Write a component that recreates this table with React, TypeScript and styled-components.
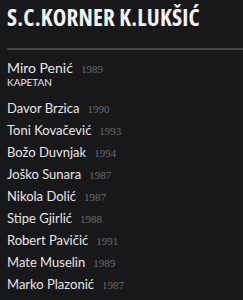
import React from 'react';
import styled, { createGlobalStyle } from 'styled-components';

interface IPlayer {
  name: string,
  year: number
}

const captain: IPlayer = { name: 'Miro Penić', year: 1989 };

const players: IPlayer[] = [
  { name: 'Davor Brzica', year: 1990 },
  { name: 'Toni Kovačević', year: 1993 },
  { name: 'Božo Duvnjak', year: 1994 },
  { name: 'Joško Sunara', year: 1987 },
  { name: 'Nikola Dolić', year: 1987 },
  { name: 'Stipe Gjirlić', year: 1988 },
  { name: 'Robert Pavičić', year: 1991 },
  { name: 'Mate Muselin', year: 1989 },
  { name: 'Marko Plazonić', year: 1987 },
];

export default function App(){
  return <>
    <GlobalStyle />
    <Container>
      <Title>S.C.KORNER K.LUKŠIĆ</Title>
      <Divider />
      <Captain>
        <Name $big>{captain.name}<Year>{captain.year}</Year></Name>
        <Role>KAPETAN</Role>
      </Captain>
      <List>
        {players.map((player, index) => <Name key={index}>
          {player.name}<Year>{player.year}</Year>
        </Name>)}
      </List>
    </Container>
  </>
}

const GlobalStyle = createGlobalStyle`
  body {
    margin: 0;
    background: #18181a;
    font-family: Lato, "Noto Sans", sans-serif;
  }
`

const Container = styled.div`
  padding: 3px 0 0 7px;
  height: 300px;
  box-sizing: border-box;
  overflow: hidden;
`

const Title = styled.h1`
  margin: 0;
  font-family: "Open Sans", sans-serif;
  font-stretch: 75%;
  font-weight: 700;
  font-size: 23px;
  line-height: 28px;
  letter-spacing: 0.2px;
  color: #f4f4f4;
  white-space: nowrap;
`

const Divider = styled.div`
  height: 2px;
  background: #444446;
  margin-top: 17px;
`

const Captain = styled.div`
  margin-top: 9px;
`

const Name = styled.div<{ $big?: boolean }>`
  display: flex;
  align-items: baseline;
  height: ${p => p.$big ? '17px' : '22px'};
  font-size: ${p => p.$big ? '14px' : '13px'};
  line-height: ${p => p.$big ? '17px' : '22px'};
  color: #e6e6e6;
  white-space: nowrap;
`

const Year = styled.span`
  margin-left: 8px;
  font-family: "Liberation Serif", serif;
  font-size: 11px;
  color: #6a6a6c;
`

const Role = styled.div`
  font-size: 10px;
  line-height: 12px;
  color: #e6e6e6;
`

const List = styled.div`
  margin-top: 9px;
`
